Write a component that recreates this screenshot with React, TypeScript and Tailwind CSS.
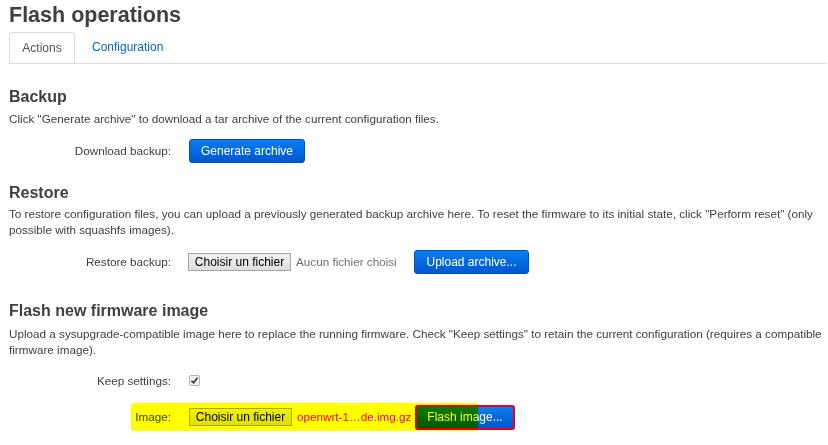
import React from 'react';

const font = { fontFamily: '"Liberation Sans", Arial, sans-serif' };

const Label: React.FC<{ children: React.ReactNode }> = ({ children }) => (
  <div className="w-[162px] shrink-0 text-right text-[11.7px] text-[#404040]">{children}</div>
);

const BlueButton: React.FC<{ children: React.ReactNode; className?: string }> = ({ children, className }) => (
  <button
    type="button"
    className={`h-[24px] rounded-[3px] border border-[#0050c0] bg-gradient-to-b from-[#0b7ef0] to-[#0056d0] text-[12px] text-white ${className ?? ''}`}
  >
    {children}
  </button>
);

const FileButton: React.FC = () => (
  <span className="inline-flex h-[18px] w-[103px] items-center justify-center border border-[#a6a6a6] bg-gradient-to-b from-[#f2f2f2] to-[#dedede] text-[12px] text-black">
    Choisir un fichier
  </span>
);

export default function App() {
  return (
    <div className="w-[828px] h-[445px] overflow-hidden bg-white pl-[9px] pr-[2px] text-[#404040]" style={font}>
      <h2 className="pt-[2px] text-[21.5px] font-bold leading-[26px] text-[#404040]">Flash operations</h2>

      <ul className="mt-[4px] flex border-b border-[#dddddd] text-[12px]">
        <li className="-mb-px h-[31px] w-[66px] rounded-t-[4px] border border-b-0 border-[#dddddd] bg-white text-center leading-[31px] text-[#555555]">
          Actions
        </li>
        <li className="ml-[17px] leading-[31px] text-[#0069d6]">Configuration</li>
      </ul>

      {/* Backup */}
      <section className="mt-[23px]">
        <h3 className="text-[16px] font-bold leading-[19px] text-[#404040]">Backup</h3>
        <p className="mt-[5px] text-[11.7px] leading-[16px]">
          Click "Generate archive" to download a tar archive of the current configuration files.
        </p>
        <div className="mt-[11px] flex items-center">
          <Label>Download backup:</Label>
          <div className="ml-[18px]">
            <BlueButton className="w-[116px]">Generate archive</BlueButton>
          </div>
        </div>
      </section>

      {/* Restore */}
      <section className="mt-[20px]">
        <h3 className="text-[16px] font-bold leading-[19px] text-[#404040]">Restore</h3>
        <p className="mt-[4px] text-[11.7px] leading-[16px]">
          To restore configuration files, you can upload a previously generated backup archive here. To reset the
          firmware to its initial state, click "Perform reset" (only possible with squashfs images).
        </p>
        <div className="mt-[12px] flex items-center">
          <Label>Restore backup:</Label>
          <div className="ml-[17px] flex items-center">
            <FileButton />
            <span className="ml-[5px] w-[118px] text-[11.7px] text-[#707070]">Aucun fichier choisi</span>
            <BlueButton className="w-[115px]">Upload archive...</BlueButton>
          </div>
        </div>
      </section>

      {/* Flash new firmware */}
      <section className="mt-[27px]">
        <h3 className="text-[16px] font-bold leading-[19px] text-[#404040]">Flash new firmware image</h3>
        <p className="mt-[6px] pr-[2px] text-[11.7px] leading-[16px]">
          Upload a sysupgrade-compatible image here to replace the running firmware. Check "Keep settings" to retain
          the current configuration (requires a compatible firmware image).
        </p>
        <div className="mt-[14px] flex items-center">
          <Label>Keep settings:</Label>
          <div className="ml-[18px]">
            <span className="flex h-[11px] w-[11px] items-center justify-center rounded-[2px] border border-[#b5b5b5] bg-[#f0f0f0]">
              <svg width="9" height="9" viewBox="0 0 9 9">
                <path d="M1.5 4.8 L3.5 6.8 L7.5 1.8" fill="none" stroke="#333333" strokeWidth="1.6" />
              </svg>
            </span>
          </div>
        </div>

        <div className="relative mt-[15px] flex items-center">
          <Label>Image:</Label>
          <div className="ml-[18px] flex items-center">
            <FileButton />
            <span className="ml-[5px] w-[118px] text-[11.7px] text-[#ff0000]">openwrt-1…de.img.gz</span>
            <button
              type="button"
              className="h-[25px] w-[100px] rounded-[3px] border-2 border-[#e8001c] bg-gradient-to-b from-[#0b7ef0] to-[#0056d0] text-[12px] text-white"
            >
              Flash image...
            </button>
          </div>
          {/* highlighter mark over the row */}
          <div className="pointer-events-none absolute left-[122px] top-[-2px] h-[28px] w-[347px] rounded-[3px] bg-[#ffff00] mix-blend-multiply" />
        </div>
      </section>
    </div>
  );
}
